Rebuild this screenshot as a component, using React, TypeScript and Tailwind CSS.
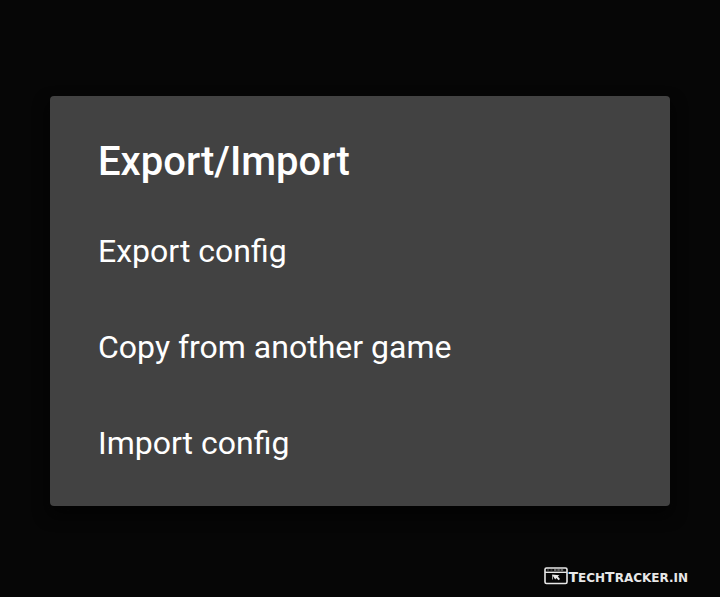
const items = ["Export config", "Copy from another game", "Import config"];

function Watermark() {
  return (
    <div className="flex items-end text-[#e8e8e8]">
      <svg width="24" height="18" viewBox="0 0 24 18" fill="none" stroke="currentColor" aria-hidden="true">
        <rect x="1" y="1" width="22" height="15.5" rx="1.5" strokeWidth="1.6" />
        <path d="M1 5.3H23" strokeWidth="1.4" />
        <path d="M3 3H5M6.5 3H8.5" strokeWidth="1" opacity="0.4" />
        <path d="M10 3H20" strokeWidth="1" strokeDasharray="2.5 0.8" opacity="0.8" />
        <path d="M8 7.5L15.5 8.3L13.8 9.6L16 12L14.6 13.2L12.3 11L11.2 12.6Z" fill="currentColor" stroke="none" />
        <path d="M8.5 8V12.5" strokeWidth="1" opacity="0.7" />
      </svg>
      <span className="font-['DejaVu_Sans',sans-serif] text-sm leading-[14px] font-bold">
        T<span className="text-xs leading-[14px]">ECH</span>T<span className="text-xs leading-[14px]">RACKER.IN</span>
      </span>
    </div>
  );
}

export default function App() {
  return (
    <main className="flex min-h-screen flex-col bg-[#060606] px-[50px] pt-24 pb-3 font-['Roboto',sans-serif] text-white">
      <section role="dialog" aria-labelledby="title" className="rounded bg-[#424242] pt-10 pb-[15px] shadow-[0_8px_16px_#030303]">
        <h1 id="title" className="px-12 pb-[15px] text-[40px] leading-[52px] font-medium">Export/Import</h1>
        <ul>
          {items.map((item) => (
            <li key={item}>
              <button type="button" className="block h-24 w-full px-12 text-left text-[32px]">{item}</button>
            </li>
          ))}
        </ul>
      </section>
      <footer className="-mr-[18px] mt-auto flex justify-end">
        <Watermark />
      </footer>
    </main>
  );
}
